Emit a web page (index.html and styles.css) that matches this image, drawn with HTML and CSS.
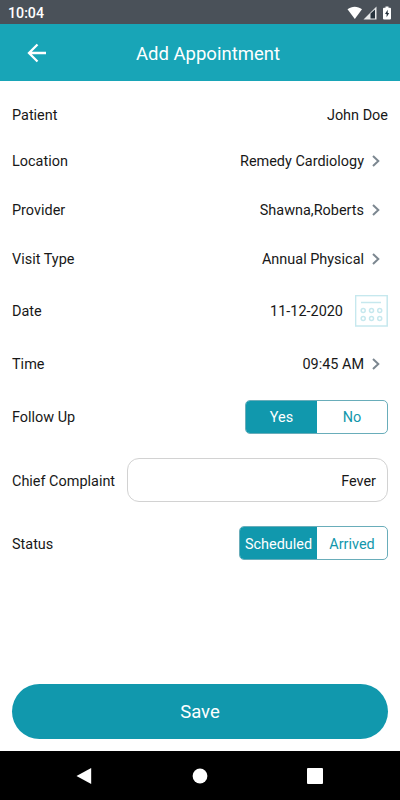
FILE: index.html
```html
<!DOCTYPE html>
<html lang="en">
<head>
<meta charset="utf-8">
<title>Add Appointment</title>
<link rel="stylesheet" href="styles.css">
</head>
<body>
<div class="screen">
  <div class="status-bar">
    <span>10:04</span>
    <svg class="status-icons" width="48" height="16" viewBox="0 0 48 16">
      <path fill="#fff" d="M.5 4.2C4.8.8 10.700.8 15 4.200L7.800 14z"/>
      <path fill="#e8eaeb" d="M16.500 14.500L29.500 1.500V14.500z"/>
      <path fill="#26323c" d="M23.500 8.500L28 4.500V13.500H23.500z"/>
      <path fill="#fff" d="M38.500 1.500h3v1.300h1.500a1 1 0 0 1 1 1V13.500a1 1 0 0 1-1 1h-6a1 1 0 0 1-1-1V3.800a1 1 0 0 1 1-1h1.500z"/>
      <path fill="#26323c" d="M40.700 4.700L38 9h1.600v3.300L42.200 8h-1.500z"/>
    </svg>
  </div>
  <header class="header">
    <svg class="back" width="20" height="20" viewBox="0 0 20 20"><path d="M19 10H2M10.500 1.500L2 10l8.500 8.500"/></svg>
    <h1>Add Appointment</h1>
  </header>
  <main class="form">
    <div class="row patient"><span>Patient</span><span class="value">John Doe</span></div>
    <div class="row location"><span>Location</span><span class="value">Remedy Cardiology</span><svg class="chevron" width="8" height="12" viewBox="0 0 8 12"><path d="M1 1l5.300 5L1 11"/></svg></div>
    <div class="row provider"><span>Provider</span><span class="value">Shawna,Roberts</span><svg class="chevron" width="8" height="12" viewBox="0 0 8 12"><path d="M1 1l5.300 5L1 11"/></svg></div>
    <div class="row visit"><span>Visit Type</span><span class="value">Annual Physical</span><svg class="chevron" width="8" height="12" viewBox="0 0 8 12"><path d="M1 1l5.300 5L1 11"/></svg></div>
    <div class="row date"><span>Date</span><span class="value">11-12-2020</span>
      <svg class="calendar" width="33" height="32" viewBox="0 0 33 32">
        <rect x=".6" y=".6" width="31.600" height="30.400"/>
        <path d="M6 7.500h20"/>
        <circle cx="8.200" cy="15.500" r="2"/><circle cx="16.500" cy="15.500" r="2"/><circle cx="24.700" cy="15.500" r="2"/>
        <circle cx="8.200" cy="23.500" r="2"/><circle cx="16.500" cy="23.500" r="2"/><circle cx="24.700" cy="23.500" r="2"/>
      </svg>
    </div>
    <div class="row time"><span>Time</span><span class="value">09:45 AM</span><svg class="chevron" width="8" height="12" viewBox="0 0 8 12"><path d="M1 1l5.300 5L1 11"/></svg></div>
    <div class="row follow"><span>Follow Up</span><div class="toggle toggle-even"><span class="on">Yes</span><span>No</span></div></div>
    <div class="row complaint"><span>Chief Complaint</span><div class="field">Fever</div></div>
    <div class="row status"><span>Status</span><div class="toggle toggle-wide"><span class="on">Scheduled</span><span>Arrived</span></div></div>
  </main>
  <div class="save">Save</div>
  <nav class="nav-bar">
    <svg width="16" height="18" viewBox="0 0 16 18"><path d="M15.200 1v16L.5 9z"/></svg>
    <svg width="16" height="16" viewBox="0 0 16 16"><circle cx="8" cy="8" r="7.400"/></svg>
    <svg width="16" height="16" viewBox="0 0 16 16"><rect width="16" height="16" rx="1"/></svg>
  </nav>
</div>
</body>
</html>
```
FILE: styles.css
```css
* { box-sizing: border-box; }
body { margin: 0; background: #fff; font-family: Roboto, sans-serif; }
.screen { display: flex; flex-direction: column; width: 400px; height: 800px; overflow: hidden; }
.status-bar {
  display: flex; align-items: center; justify-content: space-between;
  height: 24px; padding: 2px 5px 0 8px;
  background: #4a5159; color: #fff; font-size: 14.200px; font-weight: 500;
}
.status-icons { margin-top: -1px; }
.header {
  display: grid; grid-template-columns: 20px 1fr 20px; align-items: center;
  height: 57px; padding: 0 11px 0 27px; background: #18a5b7; color: #fff;
}
.header h1 { margin: 2px 0 0; text-align: center; font-size: 18.500px; font-weight: 400; }
.back { fill: none; stroke: #fff; stroke-width: 2.300; }
.form { flex: 1; padding: 11px 12px 0; color: #181818; font-size: 14.450px; line-height: 18px; }
.row { display: flex; align-items: center; }
.row > span { padding-top: 2px; }
.value { margin-left: auto; }
.patient, .location, .visit { height: 46px; }
.provider { height: 52px; }
.date, .follow { height: 58px; }
.time { height: 48px; }
.complaint { height: 69px; gap: 12px; }
.status { height: 57px; }
.chevron { margin: -1px 8px 0; fill: none; stroke: #7c8790; stroke-width: 2; }
.calendar { margin-left: 12px; fill: none; stroke: #c6e8ee; stroke-width: 1.500; }
.toggle {
  display: grid; height: 34px; margin-left: auto; overflow: hidden;
  border: 1px solid #69adba; border-radius: 5px; color: #1297ac;
}
.toggle span { display: flex; align-items: center; justify-content: center; padding-top: 2px; }
.toggle .on { background: #1198ad; color: #fff; }
.toggle-even { grid-template-columns: 71px 70px; }
.toggle-wide { grid-template-columns: 77px 70px; margin-bottom: 1px; }
.toggle-wide span { padding-top: 3px; }
.field {
  display: flex; flex: 1; align-items: center; justify-content: flex-end;
  height: 44px; margin-bottom: 1px; padding: 3px 11px 0 0; border: 1px solid #d2d2d2; border-radius: 12px;
}
.save {
  display: flex; align-items: center; justify-content: center; height: 55px;
  margin: 0 12px 12px; border-radius: 28px; background: #1198ad; color: #fff; font-size: 18.500px;
}
.nav-bar {
  display: flex; align-items: center; justify-content: space-between;
  height: 49px; padding: 0 77px 0 76px; background: #000;
}
.nav-bar svg { fill: #fff; }
```
